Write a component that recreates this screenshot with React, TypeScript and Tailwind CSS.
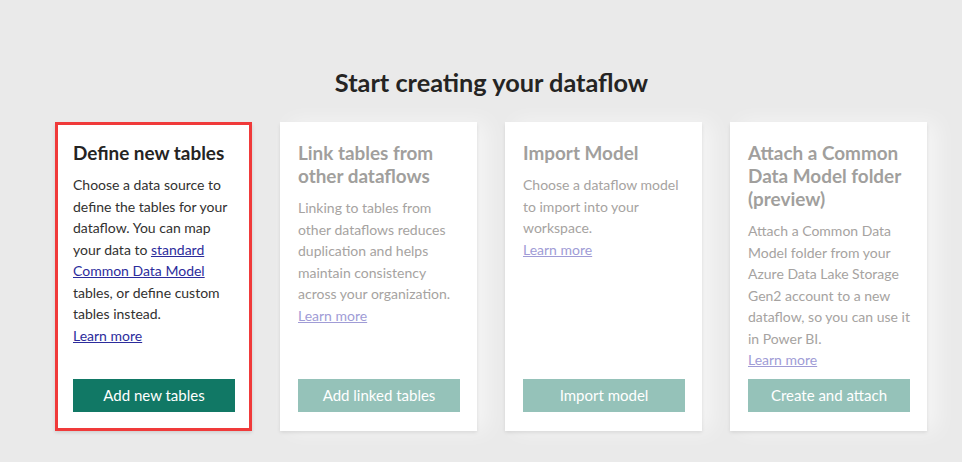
const cards = [
  {
    title: 'Define new tables',
    body: (
      <>
        Choose a data source to define the tables for your dataflow. You can map your data to{' '}
        <a href="#" className="underline text-[#2c2c9c]">standard Common Data Model</a> tables, or
        define custom tables instead.
      </>
    ),
    button: 'Add new tables',
    active: true,
  },
  {
    title: 'Link tables from other dataflows',
    body: <>Linking to tables from other dataflows reduces duplication and helps maintain consistency across your organization.</>,
    button: 'Add linked tables',
    active: false,
  },
  {
    title: 'Import Model',
    body: <>Choose a dataflow model to import into your workspace.</>,
    button: 'Import model',
    active: false,
  },
  {
    title: 'Attach a Common Data Model folder (preview)',
    body: <>Attach a Common Data Model folder from your Azure Data Lake Storage Gen2 account to a new dataflow, so you can use it in Power BI.</>,
    button: 'Create and attach',
    active: false,
  },
];

export default function App() {
  return (
    <div className="min-h-[462px] bg-[#eaeaea] pl-[55px] pt-[66px] font-['Lato',sans-serif]">
      <div className="w-[873px]">
        <h1 className="text-center text-[25.3px] leading-[32px] font-bold text-[#252423]">
          Start creating your dataflow
        </h1>

        <div className="mt-[24px] flex gap-[28px]">
          {cards.map(c => (
            <div
              key={c.title}
              className={
                c.active
                  ? 'w-[197px] h-[309px] flex flex-col bg-white border-[3px] border-[#f03a3a] pt-[16px] pl-[15px] pr-[14px] pb-[16px] shadow-[0_1.6px_3.6px_rgba(0,0,0,0.13)]'
                  : 'w-[197px] h-[309px] flex flex-col bg-white border-[3px] border-white pt-[16px] pl-[15px] pr-[14px] pb-[16px] shadow-[0_1.6px_3.6px_rgba(0,0,0,0.10),10px_0_20px_rgba(255,255,255,0.55)]'
              }
            >
              <h2
                className={
                  c.active
                    ? 'text-[18.9px] leading-[23px] font-bold text-[#252423]'
                    : 'text-[18.9px] leading-[23px] font-bold text-[#a19f9d]'
                }
              >
                {c.title}
              </h2>
              <p
                className={
                  c.active
                    ? 'mt-[10px] text-[14px] leading-[21.5px] text-[#323130]'
                    : 'mt-[10px] text-[14px] leading-[21.5px] text-[#a6a3a1]'
                }
              >
                {c.body}
                <br />
                <a href="#" className={c.active ? 'underline text-[#2c2c9c]' : 'underline text-[#a09cd6]'}>
                  Learn more
                </a>
              </p>
              <button
                className={
                  c.active
                    ? 'mt-auto h-[33px] w-full bg-[#117865] text-white text-[15px]'
                    : 'mt-auto h-[33px] w-full bg-[#95c2b9] text-white text-[15px]'
                }
              >
                {c.button}
              </button>
            </div>
          ))}
        </div>
      </div>
    </div>
  );
}
